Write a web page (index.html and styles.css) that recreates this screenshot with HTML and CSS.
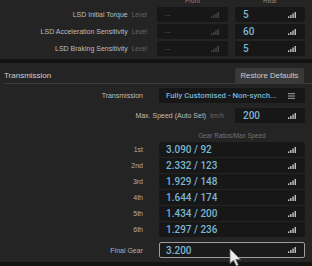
FILE: index.html
```html
<!DOCTYPE html>
<html lang="en">
<head>
    <meta charset="UTF-8">
    <meta name="viewport" content="width=device-width, initial-scale=1.0">
    <title>Tuning - Transmission</title>
    <link rel="stylesheet" href="styles.css">
</head>
<body>

<svg width="0" height="0" class="defs">
    <symbol id="bars" viewBox="0 0 8 6">
        <rect x="0" y="4.4" width="1.3" height="1.6"/>
        <rect x="2.2" y="3" width="1.3" height="3"/>
        <rect x="4.4" y="1.5" width="1.3" height="4.5"/>
        <rect x="6.6" y="0" width="1.3" height="6"/>
    </symbol>
</svg>

<div class="page">
    <!-- LSD settings -->
    <section class="panel lsd">
        <div class="lsd-grid">
            <div></div>
            <div class="colhead">Front</div>
            <div class="colhead">Rear</div>

            <div class="label">LSD Initial Torque <span class="unit">Level</span></div>
            <div class="field off"><span>--</span><svg class="bars"><use href="#bars"/></svg></div>
            <div class="field"><span class="val">5</span><svg class="bars"><use href="#bars"/></svg></div>

            <div class="label">LSD Acceleration Sensitivity <span class="unit">Level</span></div>
            <div class="field off"><span>--</span><svg class="bars"><use href="#bars"/></svg></div>
            <div class="field"><span class="val">60</span><svg class="bars"><use href="#bars"/></svg></div>

            <div class="label">LSD Braking Sensitivity <span class="unit">Level</span></div>
            <div class="field off"><span>--</span><svg class="bars"><use href="#bars"/></svg></div>
            <div class="field"><span class="val">5</span><svg class="bars"><use href="#bars"/></svg></div>
        </div>
    </section>

    <!-- Transmission -->
    <section class="panel trans">
        <div class="sec-head">
            <span class="sec-title">Transmission</span>
            <button class="btn">Restore Defaults</button>
        </div>

        <div class="trans-body">
            <div class="row first">
                <div class="label">Transmission</div>
                <div class="field select">
                    <span class="val small">Fully Customised - Non-synch...</span>
                    <svg class="menu" viewBox="0 0 7 6"><rect x="0" y="0" width="7" height="1.2"/><rect x="0" y="2.4" width="7" height="1.2"/><rect x="0" y="4.8" width="7" height="1.2"/></svg>
                </div>
            </div>

            <div class="speed-row">
                <div class="label">Max. Speed (Auto Set) <span class="unit">km/h</span></div>
                <div class="field short"><span class="val">200</span><svg class="bars"><use href="#bars"/></svg></div>
            </div>

            <div class="gear-head"><span>Gear Ratios/Max Speed</span></div>

            <div class="gears">
                <div class="row"><div class="label">1st</div><div class="field"><span class="val">3.090 / 92</span><svg class="bars"><use href="#bars"/></svg></div></div>
                <div class="row"><div class="label">2nd</div><div class="field"><span class="val">2.332 / 123</span><svg class="bars"><use href="#bars"/></svg></div></div>
                <div class="row"><div class="label">3rd</div><div class="field"><span class="val">1.929 / 148</span><svg class="bars"><use href="#bars"/></svg></div></div>
                <div class="row"><div class="label">4th</div><div class="field"><span class="val">1.644 / 174</span><svg class="bars"><use href="#bars"/></svg></div></div>
                <div class="row"><div class="label">5th</div><div class="field"><span class="val">1.434 / 200</span><svg class="bars"><use href="#bars"/></svg></div></div>
                <div class="row"><div class="label">6th</div><div class="field"><span class="val">1.297 / 236</span><svg class="bars"><use href="#bars"/></svg></div></div>
            </div>

            <div class="row final">
                <div class="label">Final Gear</div>
                <div class="field focus"><span class="val">3.200</span><svg class="bars"><use href="#bars"/></svg></div>
            </div>
        </div>
    </section>

    <svg class="cursor" viewBox="0 0 13 19" width="13" height="19">
        <path d="M1 1 L1 15.5 L4.6 12.3 L7.3 18 L9.4 17 L6.8 11.5 L11.6 11.5 Z" fill="#ececec" stroke="#6a6a6a" stroke-width="0.8" stroke-linejoin="round"/>
    </svg>
</div>

</body>
</html>
```

FILE: styles.css
```css
body {
    margin: 0;
    padding: 0;
    background-color: #131313;
    color: #c4c4c4;
    font-family: "Liberation Sans", Arial, sans-serif;
}
.defs {
    position: absolute;
}
.page {
    position: relative;
    width: 312px;
    height: 266px;
    overflow: hidden;
}
.panel {
    background-color: #242424;
}
.label {
    font-size: 7px;
    color: #bdbdbd;
    text-align: right;
    white-space: nowrap;
}
.unit {
    font-size: 6.4px;
    color: #666;
    margin-left: 2px;
}
.field {
    display: flex;
    align-items: center;
    justify-content: space-between;
    height: 15px;
    box-sizing: border-box;
    padding: 0 9px 0 7px;
    background-color: #171717;
    border-radius: 2px;
}
.val {
    font-family: Roboto, "Liberation Sans", sans-serif;
    font-size: 10px;
    font-weight: 500;
    color: #7bb6d2;
}
.val.small {
    font-size: 7.8px;
}
.bars {
    width: 8px;
    height: 6px;
    fill: #cfcfcf;
}
.field.off {
    color: #555;
    font-size: 8px;
}
.field.off .bars {
    fill: #4a4a4a;
}

/* LSD */
.lsd {
    padding: 0 7px 3px 0;
    overflow: hidden;
}
.lsd-grid {
    display: grid;
    grid-template-columns: 1fr 71px 70px;
    column-gap: 7px;
    row-gap: 2px;
    grid-template-rows: 9px 15px 15px 15px;
    margin-top: -4px;
}
.lsd .label {
    padding-right: 3px;
    align-self: center;
}
.lsd .field {
    padding-left: 8px;
}
.colhead {
    font-size: 6.5px;
    color: #8a8a8a;
    text-align: center;
    line-height: 9px;
}

/* transmission */
.trans {
    margin-top: 4px;
    padding-bottom: 4px;
}
.sec-head {
    display: flex;
    align-items: center;
    justify-content: space-between;
    height: 16px;
    padding: 4px 8px 0 0;
    margin-left: 4px;
    border-bottom: 1px solid #3c3c3c;
}
.sec-title {
    font-size: 8px;
    color: #cfcfcf;
}
.btn {
    height: 15px;
    width: 69px;
    padding: 0;
    border: none;
    border-radius: 2px;
    background-color: #393939;
    color: #cdcdcd;
    font-family: "Liberation Sans", Arial, sans-serif;
    font-size: 7.8px;
}
.trans-body {
    padding-right: 7px;
}
.row {
    display: grid;
    grid-template-columns: 1fr 146px;
    column-gap: 16px;
    align-items: center;
}
.row.first {
    margin-top: 4px;
}
.field.select {
    padding-right: 10px;
}
.menu {
    width: 7px;
    height: 6px;
    fill: #8a8a8a;
}
.speed-row {
    display: flex;
    justify-content: flex-end;
    align-items: center;
    gap: 11px;
    margin-top: 5px;
}
.field.short {
    width: 70px;
    padding-left: 8px;
}
.gear-head {
    margin-left: auto;
    width: 146px;
    padding-top: 6px;
    line-height: 13px;
    height: 13px;
    text-align: center;
    font-size: 6.3px;
    color: #747474;
}
.gears {
    display: flex;
    flex-direction: column;
    gap: 1px;
}
.gears .label, .final .label {
    color: #b0b0b0;
}
.final {
    margin-top: 5px;
}
.field.focus {
    height: 16px;
    border: 1px solid #9c9c9c;
    background-color: #1a1a1a;
    padding-left: 6px;
    padding-right: 8px;
}
.cursor {
    position: absolute;
    left: 229px;
    top: 248px;
}
```
